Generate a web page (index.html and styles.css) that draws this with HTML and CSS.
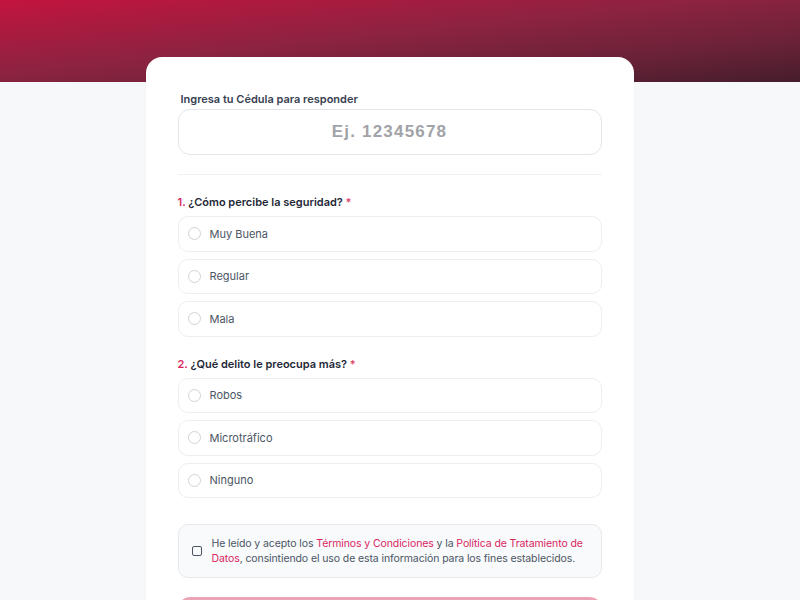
FILE: index.html
```html
<!DOCTYPE html>
<html lang="es">
<head>
<meta charset="utf-8">
<title>Encuesta</title>
<link rel="stylesheet" href="styles.css">
</head>
<body>
<header class="hero"></header>
<main class="wrap">
  <form class="card">
    <label class="id-label" for="cedula">Ingresa tu Cédula para responder</label>
    <input class="id-input" id="cedula" type="text" placeholder="Ej. 12345678">
    <hr class="divider">

    <section class="question">
      <h2 class="q-title"><span class="num">1.</span> ¿Cómo percibe la seguridad? <span class="req">*</span></h2>
      <div class="options">
        <label class="option"><span class="radio"></span><span>Muy Buena</span></label>
        <label class="option"><span class="radio"></span><span>Regular</span></label>
        <label class="option"><span class="radio"></span><span>Mala</span></label>
      </div>
    </section>

    <section class="question">
      <h2 class="q-title"><span class="num">2.</span> ¿Qué delito le preocupa más? <span class="req">*</span></h2>
      <div class="options">
        <label class="option"><span class="radio"></span><span>Robos</span></label>
        <label class="option"><span class="radio"></span><span>Microtráfico</span></label>
        <label class="option"><span class="radio"></span><span>Ninguno</span></label>
      </div>
    </section>

    <div class="consent">
      <span class="check"></span>
      <p class="consent-text">He leído y acepto los <span class="link">Términos y Condiciones</span> y la <span class="link">Política de Tratamiento de Datos</span>, consintiendo el uso de esta información para los fines establecidos.</p>
    </div>

    <button class="submit" type="button" disabled>Enviar</button>
  </form>
</main>
</body>
</html>
```
FILE: styles.css
```css
* { box-sizing: border-box; }
html, body { margin: 0; padding: 0; }
body {
  background: #f6f8fa;
  font-family: Inter, "Noto Sans", "Liberation Sans", sans-serif;
  color: #1f2937;
  height: 600px;
  overflow: hidden;
}
.hero {
  height: 82px;
  background: linear-gradient(to bottom right, #c3143f 0%, #8c2340 45%, #6a2238 75%, #461d2b 100%);
}
.wrap {
  display: flex;
  justify-content: center;
  margin-top: -25px;
}
.card {
  width: 488px;
  margin-left: -21px;
  background: #fff;
  border-radius: 16px;
  padding: 35px 32px 40px;
  display: flex;
  flex-direction: column;
  box-shadow: 0 1px 3px rgba(15, 23, 42, 0.04);
}
.id-label {
  font-size: 11px;
  line-height: 14px;
  font-weight: 600;
  color: #374151;
  padding-left: 3px;
  margin-bottom: 3px;
}
.id-input {
  height: 46px;
  border: 1.5px solid #e3e5e9;
  border-radius: 12px;
  text-align: center;
  font-family: "Liberation Sans", Arial, sans-serif;
  font-weight: 700;
  font-size: 17px;
  letter-spacing: 1.2px;
  color: #374151;
  outline: none;
  background: #fff;
}
.id-input::placeholder { color: #a1a3a8; }
.divider {
  border: 0;
  border-top: 1px solid #f1f2f4;
  margin: 19px 0 20px;
  width: 100%;
}
.question { display: flex; flex-direction: column; }
.question + .question { margin-top: 20px; }
.q-title {
  margin: 0 0 7px;
  font-size: 11px;
  line-height: 14px;
  font-weight: 600;
  color: #1f2937;
}
.num { color: #d9265f; }
.req { color: #e0456f; }
.options { display: flex; flex-direction: column; gap: 7px; }
.option {
  height: 35.5px;
  border: 1px solid #eceef1;
  border-radius: 10px;
  display: flex;
  align-items: center;
  padding-left: 9px;
  gap: 9px;
  font-size: 11px;
  color: #4b5563;
  background: #fff;
}
.radio {
  width: 13px;
  height: 13px;
  border: 1.3px solid #cfd3d9;
  border-radius: 50%;
  flex: none;
}
.consent {
  margin-top: 26px;
  height: 54px;
  border: 1px solid #e6e8ec;
  border-radius: 10px;
  background: #f8fafc;
  display: flex;
  align-items: center;
  padding: 0 6px 0 12px;
  gap: 10px;
}
.check {
  width: 10px;
  height: 10px;
  border: 1.3px solid #4b5563;
  border-radius: 2px;
  flex: none;
  margin-left: 1px;
}
.consent-text {
  margin: 0;
  font-size: 10.5px;
  line-height: 15px;
  letter-spacing: -0.1px;
  color: #4b5563;
}
.link { color: #d9265f; }
.submit {
  margin-top: 19px;
  height: 44px;
  border: 0;
  border-radius: 12px;
  background: #eba4b4;
  color: #fff;
  font-family: inherit;
  font-size: 13px;
  font-weight: 600;
}
```
